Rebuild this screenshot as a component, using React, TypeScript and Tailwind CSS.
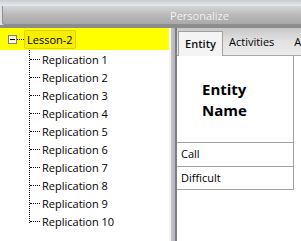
import React from "react";

const reps = Array.from({ length: 10 }, (_, i) => `Replication ${i + 1}`);

export default function App() {
  return (
    <div className="w-[301px] h-[241px] overflow-hidden flex flex-col bg-white font-['Open_Sans',sans-serif] text-[11px] text-black">
      {/* Ribbon */}
      <div className="h-[25px] shrink-0 flex flex-col bg-[#dfe3e7]">
        <div className="h-[6px] bg-gradient-to-b from-[#c9cdd1] to-[#e6eaee]" />
        <div className="flex-1 ml-[2px] rounded-bl-[3px] border-l border-b border-[#8e8e8e] bg-gradient-to-b from-[#d6d6d6] via-[#b9b9b9] to-[#a9a9a9] flex items-center justify-center pl-[95px]">
          <span className="text-[#f2f2f2] text-[11px] leading-none">Personalize</span>
        </div>
      </div>
      <div className="h-[3px] shrink-0 bg-[#8c8c8c]" />
      {/* Main */}
      <div className="flex-1 flex min-h-0">
        {/* Tree */}
        <div className="w-[169px] shrink-0 flex flex-col relative">
          <div className="h-[22px] bg-[#ffff00] flex items-center">
            <div className="ml-[8px] w-[9px] h-[9px] border border-[#808080] bg-[#fbfbe0] flex items-center justify-center">
              <div className="w-[5px] h-px bg-black" />
            </div>
            <div className="w-[7px] border-t border-dotted border-black" />
            <div className="h-[19px] px-[2px] border border-[#e0d000] rounded-[2px] bg-[#f8ef00] flex items-center leading-none">
              Lesson-2
            </div>
          </div>
          <div className="absolute left-[29px] top-[22px] h-[173px] border-l border-dotted border-black" />
          {reps.map((r) => (
            <div key={r} className="h-[18px] flex items-center pl-[30px]">
              <div className="w-[10px] border-t border-dotted border-black" />
              <span className="ml-[2px] leading-none">{r}</span>
            </div>
          ))}
        </div>
        {/* Splitter */}
        <div className="w-[8px] shrink-0 flex">
          <div className="w-[2px] bg-[#f4f4f4]" />
          <div className="w-[4px] bg-gradient-to-r from-[#c4c4c8] to-[#b4b4bc]" />
          <div className="w-[2px] bg-[#7d7d85]" />
        </div>
        {/* Right */}
        <div className="flex-1 min-w-0 overflow-hidden flex flex-col">
          <div className="h-[28px] shrink-0 bg-gradient-to-b from-[#c8c8c8] via-[#e2e2e2] to-[#ececec] flex items-end pl-[1px] border-b border-[#a8a8a8] whitespace-nowrap">
            <div className="h-[25px] w-[45px] shrink-0 -mb-px bg-[#f4f4f4] border border-b-0 border-[#a0a0a0] flex items-center justify-center font-semibold text-[#111]">
              Entity
            </div>
            <div className="h-[25px] ml-[6px] shrink-0 flex items-center">Activities</div>
            <div className="h-[25px] ml-[20px] shrink-0 flex items-center">Activity</div>
          </div>
          <div className="flex-1 bg-white">
            <div className="w-[117px] border-r border-[#a0a0a0]">
              <div className="h-[87px] border-b border-[#a0a0a0] flex items-center pl-[25px] pt-[2px]">
                <div className="font-bold text-[15px] leading-[21px]">
                  Entity
                  <br />
                  Name
                </div>
              </div>
              <div className="h-[24px] border-b border-[#a0a0a0] flex items-center pl-[4px]">Call</div>
              <div className="h-[23px] border-b border-[#a0a0a0] flex items-center pl-[4px]">Difficult</div>
            </div>
          </div>
        </div>
      </div>
    </div>
  );
}
